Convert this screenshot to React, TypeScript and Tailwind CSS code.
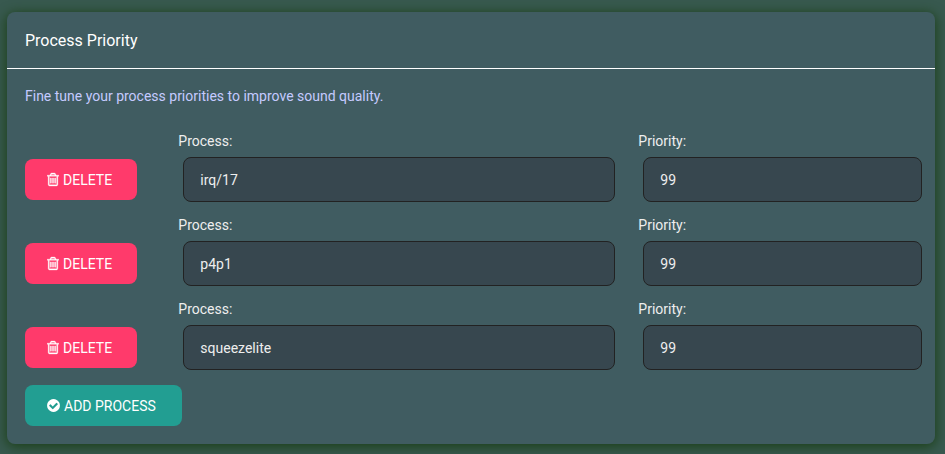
import { useId, useState } from "react";

type Process = { id: number; name: string; priority: string };

const initialProcesses: Process[] = [
  { id: 1, name: "irq/17", priority: "99" },
  { id: 2, name: "p4p1", priority: "99" },
  { id: 3, name: "squeezelite", priority: "99" },
];

function TrashIcon() {
  return (
    <svg viewBox="192 0 1408 1792" className="h-[15px] w-3" fill="currentColor" stroke="currentColor" strokeWidth="40" aria-hidden="true">
      <path d="M704 736v576q0 14-9 23t-23 9h-64q-14 0-23-9t-9-23v-576q0-14 9-23t23-9h64q14 0 23 9t9 23zm256 0v576q0 14-9 23t-23 9h-64q-14 0-23-9t-9-23v-576q0-14 9-23t23-9h64q14 0 23 9t9 23zm256 0v576q0 14-9 23t-23 9h-64q-14 0-23-9t-9-23v-576q0-14 9-23t23-9h64q14 0 23 9t9 23zm128 724v-948h-896v948q0 22 7 40.500t14.500 27 10.500 8.500h832q3 0 10.500-8.500t14.500-27 7-40.500zm-672-1076h448l-48-117q-7-9-17-11h-317q-10 2-17 11zm928 32v64q0 14-9 23t-23 9h-96v948q0 83-47 143.500t-113 60.500h-832q-66 0-113-58.500t-47-141.500v-952h-96q-14 0-23-9t-9-23v-64q0-14 9-23t23-9h309l70-167q15-37 54-63t79-26h320q40 0 79 26t54 63l70 167h309q14 0 23 9t9 23z" />
    </svg>
  );
}

function CheckIcon() {
  return (
    <svg viewBox="128 0 1536 1792" className="h-[15px] w-[13px]" fill="currentColor" aria-hidden="true">
      <path d="M1412 734q0-28-18-46l-91-90q-19-19-45-19t-45 19l-408 407-226-226q-19-19-45-19t-45 19l-91 90q-18 18-18 46 0 27 18 45l362 362q19 19 45 19 27 0 46-19l543-543q18-18 18-45zm252 162q0 209-103 385.500t-279.500 279.500-385.500 103-385.500-103-279.500-279.500-103-385.500 103-385.500 279.500-279.500 385.500-103 385.500 103 279.500 279.500 103 385.500z" />
    </svg>
  );
}

function Field({ label, value, className, onChange }: {
  label: string;
  value: string;
  className: string;
  onChange: (value: string) => void;
}) {
  const id = useId();
  return (
    <div className={`${className} flex flex-col pl-[15px] pr-2`}>
      <label htmlFor={id} className="mb-1 leading-6">{label}</label>
      <div className="flex pl-[5px]">
        <input
          id={id}
          value={value}
          onChange={(event) => onChange(event.target.value)}
          className="h-[45px] w-full min-w-0 rounded-lg border border-[#222222] bg-[#37474f] px-4 outline-none"
        />
      </div>
    </div>
  );
}

export default function App() {
  const [processes, setProcesses] = useState(initialProcesses);

  const update = (id: number, patch: Partial<Process>) =>
    setProcesses((list) => list.map((p) => (p.id === id ? { ...p, ...patch } : p)));

  return (
    <main className="min-h-screen bg-[#38594f] pb-2.5 pl-[7px] pr-2.5 pt-3 font-['Roboto',sans-serif] text-sm text-[#eeeeee]">
      <section className="rounded-lg bg-[#405c61] shadow-[0_2px_12px_1px_#1c4019]">
        <h1 className="border-b border-white px-[18px] pb-[15px] pt-[17px] text-base leading-6 text-white">Process Priority</h1>
        <div className="px-[18px] pb-[18px] pt-[15px]">
          <p className="leading-6 text-[#c5caff]">Fine tune your process priorities to improve sound quality.</p>
          <div className="-mx-[15px] mb-[15px] mt-[21px] flex flex-col gap-[11px]">
            {processes.map((process) => (
              <div key={process.id} className="grid grid-cols-12 pr-0.5">
                <div className="col-span-2 flex items-end pb-0.5 pl-[15px]">
                  <button
                    type="button"
                    onClick={() => setProcesses((list) => list.filter((p) => p.id !== process.id))}
                    className="flex h-[41px] w-28 items-center gap-1 rounded-lg bg-[#ff3a6b] pl-[22px] text-white"
                  >
                    <TrashIcon />
                    DELETE
                  </button>
                </div>
                <Field
                  label="Process:"
                  value={process.name}
                  className="col-span-6"
                  onChange={(name) => update(process.id, { name })}
                />
                <Field
                  label="Priority:"
                  value={process.priority}
                  className="col-span-4"
                  onChange={(priority) => update(process.id, { priority })}
                />
              </div>
            ))}
          </div>
          <button
            type="button"
            onClick={() => setProcesses((list) => [...list, { id: Date.now(), name: "", priority: "" }])}
            className="flex h-[41px] w-[157px] items-center gap-1 rounded-lg bg-[#229e92] pl-[22px] text-white"
          >
            <CheckIcon />
            ADD PROCESS
          </button>
        </div>
      </section>
    </main>
  );
}
